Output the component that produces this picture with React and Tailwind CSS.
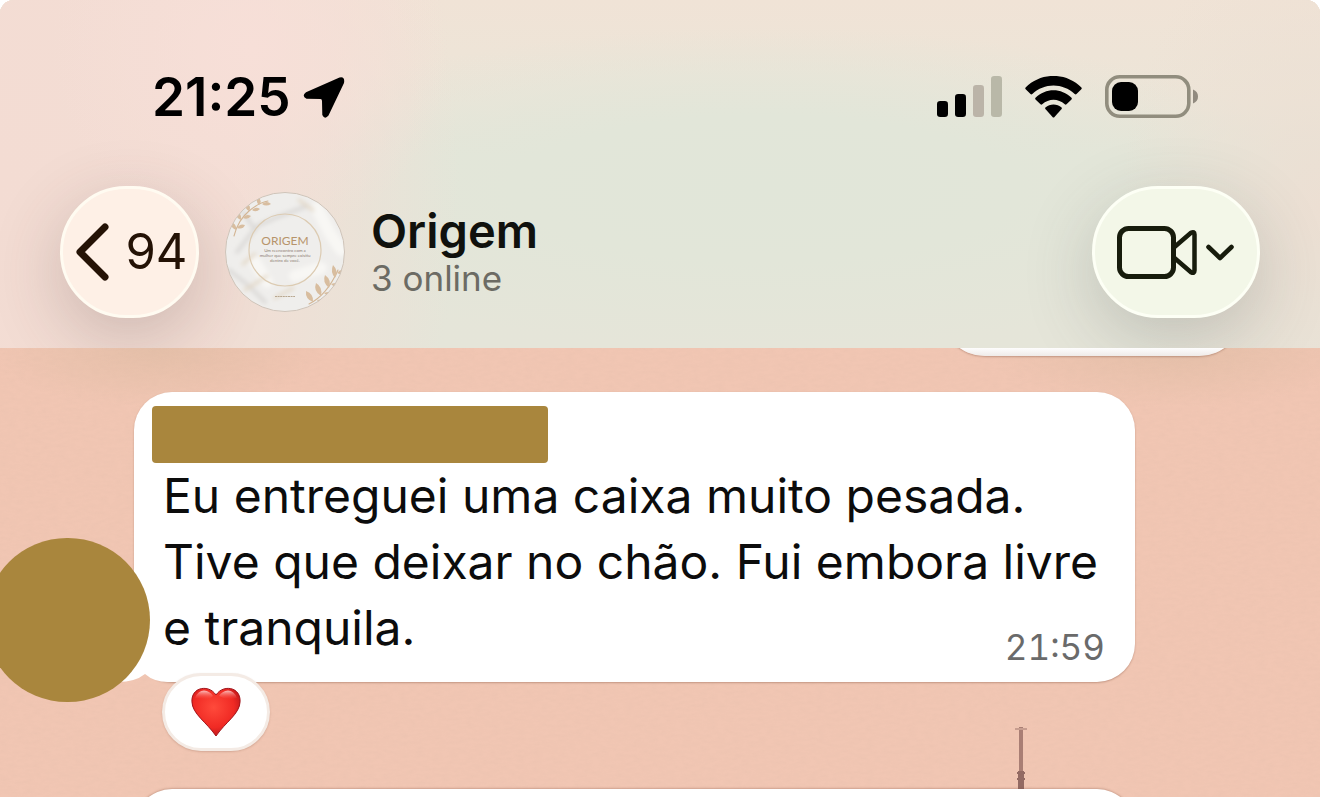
function LocationArrow() {
  return (
    <svg viewBox="0 0 42 42" className="h-[42px] w-[42px]" aria-hidden="true">
      <path
        d="M36.500 1.600 3 16.200Q-1.800 19.700 3.500 22.800L17.500 23Q19 23.200 19 25L19.300 39Q21.800 44 25.500 39.500L41 7Q42.200.2 36.500 1.600Z"
        fill="#000"
      />
    </svg>
  );
}

function SignalBars() {
  return (
    <svg viewBox="0 0 66 42" className="h-[42px] w-[66px]" aria-hidden="true">
      <rect x="0" y="25" width="11" height="16" rx="3.2" />
      <rect x="18" y="18" width="11" height="23" rx="3.2" />
      <rect x="36" y="9" width="11" height="32" rx="3.2" fill="#bbb4a8" />
      <rect x="54" y="0" width="11" height="41" rx="3.2" fill="#b9b8a8" />
    </svg>
  );
}

function WifiIcon() {
  return (
    <svg viewBox="0 0 58 43" className="h-[43px] w-[58px]" aria-hidden="true">
      <path d="M.6 11.500Q-.2 12.400.7 13.300L5.500 18Q6.400 18.900 7.300 18C19.300 6.600 37.700 6.600 49.700 18Q50.600 18.900 51.500 18L56.300 13.300Q57.200 12.400 56.400 11.500C40.800-4 16.200-4 .6 11.500Z" />
      <path d="M10.500 21.800Q9.700 22.600 10.500 23.400L15.500 28.300Q16.300 29.100 17.200 28.300C23.800 22.300 33.200 22.300 39.800 28.300Q40.700 29.100 41.500 28.300L46.500 23.400Q47.300 22.600 46.500 21.800C36.200 11.800 20.800 11.800 10.500 21.800Z" />
      <path d="M20.400 31.600Q19.700 32.300 20.400 33.100L27.500 41Q28.500 42 29.500 41L36.600 33.100Q37.300 32.300 36.600 31.600C32.100 27.600 24.900 27.600 20.400 31.600Z" />
    </svg>
  );
}

function BatteryIcon() {
  return (
    <svg viewBox="0 0 94 44" className="h-[44px] w-[94px]" aria-hidden="true">
      <rect x="1.8" y="1.8" width="82" height="39.500" rx="13" fill="none" stroke="#918d7e" strokeWidth="3.6" />
      <rect x="7" y="7" width="26" height="29" rx="9" />
      <path d="M88 14.500Q93 16.500 93 21.500T88 28.500Z" fill="#918a7f" />
    </svg>
  );
}

function StatusBar() {
  return (
    <div className="flex items-center justify-between pr-[121px] pl-[152px]">
      <div className="flex items-center gap-3">
        <span className="text-[53px] leading-[60px] font-semibold text-black">21:25</span>
        <LocationArrow />
      </div>
      <div className="flex items-center gap-[22px]">
        <SignalBars />
        <WifiIcon />
        <BatteryIcon />
      </div>
    </div>
  );
}

function GroupAvatar() {
  return (
    <svg viewBox="0 0 120 120" className="h-[120px] w-[120px] shrink-0" role="img" aria-label="Origem">
      <defs>
        <clipPath id="avatar-clip">
          <circle cx="60" cy="60" r="59.5" />
        </clipPath>
        <filter id="avatar-soft">
          <feGaussianBlur stdDeviation="2" />
        </filter>
      </defs>
      <g clipPath="url(#avatar-clip)">
        <rect width="120" height="120" fill="#efeeec" />
        <g filter="url(#avatar-soft)" fill="none" strokeLinecap="round">
          <path d="M12 60 32 34 55 24 82 14M30 38 18 20M4 78 24 94 40 110" stroke="#dcdad8" strokeWidth="4" />
          <path d="M92 16 104 40 116 58M70 84 96 76M30 70 42 90" stroke="#f8f7f4" strokeWidth="12" />
          <path d="M20 98 42 84M50 106 68 96M74 8 88 18M18 72 30 62" stroke="#e3d8c7" strokeWidth="3" />
        </g>
        <g fill="none" stroke="#d3b594" strokeWidth="1.1" strokeLinecap="round">
          <path d="M9 44Q13 28 24 19T43 9" />
          <path d="M84 112Q102 103 113 78" />
        </g>
        <g fill="#d8bd9f">
          <path d="M11 38Q5 35 6 30Q12 32 11 38ZM12 36Q15 31 20 33Q18 38 12 36ZM16 28Q10 26 12 20Q17 22 16 28ZM18 26Q21 21 26 24Q23 28 18 26ZM24 19Q19 16 21 11Q27 14 24 19ZM27 18Q31 14 35 17Q31 21 27 18ZM34 13Q30 9 33 5Q38 9 34 13ZM37 12Q42 8 46 12Q41 15 37 12Z" />
          <path d="M88 110Q80 107 81 99Q89 102 88 110ZM92 108Q98 106 102 111Q95 113 92 108ZM96 104Q88 99 91 91Q98 95 96 104ZM99 101Q106 98 110 103Q103 106 99 101ZM104 96Q97 90 100 83Q107 88 104 96ZM106 92Q113 89 116 94Q110 97 106 92ZM110 86Q105 80 108 73Q114 79 110 86ZM112 81Q116 76 119 79Q117 84 112 81Z" />
        </g>
        <circle cx="60" cy="58" r="36" fill="none" stroke="#dccbb2" strokeWidth="1.2" />
        <text x="60" y="53" textAnchor="middle" fontSize="12" fill="#b7946b" className="font-['Lato',sans-serif]">
          ORIGEM
        </text>
        <g fill="#8c7c73" textAnchor="middle" fontSize="4.4" className="font-['Lato',sans-serif]">
          <text x="60" y="60">Um reencontro com a</text>
          <text x="60" y="65">mulher que sempre existiu</text>
          <text x="60" y="70">dentro de você.</text>
        </g>
        <path d="M50 104.500H70" stroke="#b8a78f" strokeWidth="1" strokeDasharray="2 .6" />
      </g>
      <circle cx="60" cy="60" r="59.500" fill="none" stroke="#cfc4b9" strokeWidth="1" />
    </svg>
  );
}

function ChatNav() {
  return (
    <nav className="flex items-center px-[60px]">
      <button
        type="button"
        aria-label="Back, 94 unread"
        className="flex h-[132px] w-[139px] shrink-0 items-center justify-center gap-4 rounded-full border-3 border-[#fffbf1] bg-[#fef0e6] pl-1 text-[#241205] shadow-[0_20px_70px_rgba(80,60,60,0.24)]"
      >
        <svg viewBox="0 0 34 58" className="h-[58px] w-[34px]" fill="none" stroke="currentColor" strokeWidth="7" strokeLinecap="round" strokeLinejoin="round">
          <path d="M30 4 5 29 30 54" />
        </svg>
        <span className="text-[49px] leading-[60px]">94</span>
      </button>
      <a href="#group" className="ml-[26px] flex items-center gap-[26px]">
        <GroupAvatar />
        <div>
          <h1 className="text-[47px] leading-[52px] font-semibold text-[#10110d]">Origem</h1>
          <p className="text-[35px] leading-[42px] text-[#6c6b64]">3 online</p>
        </div>
      </a>
      <button
        type="button"
        aria-label="Video call"
        className="ml-auto flex h-[132px] w-[168px] shrink-0 items-center justify-center rounded-full border-3 border-[#fdfff5] bg-[#f3f7e8] text-[#171c0c] shadow-[0_20px_70px_rgba(70,75,75,0.24)]"
      >
        <svg viewBox="0 0 118 56" className="h-[56px] w-[118px]" fill="none" stroke="currentColor" strokeLinecap="round" strokeLinejoin="round">
          <rect x="2.500" y="4.500" width="54" height="48" rx="9" strokeWidth="5" />
          <path d="M57.500 23 74 8.800Q77.500 7 77.500 10.500V46.500Q77.500 50 74 48.200L57.500 34" strokeWidth="4.500" />
          <path d="M91.500 23 103 34 114.500 23" strokeWidth="4.600" />
        </svg>
      </button>
    </nav>
  );
}

function Wallpaper() {
  return (
    <svg className="absolute inset-0 h-full w-full" aria-hidden="true">
      <filter id="paper">
        <feTurbulence type="fractalNoise" baseFrequency="0.12 0.3" numOctaves="3" seed="4" />
        <feColorMatrix values="0 0 0 0 .7  0 0 0 0 .48  0 0 0 0 .38  .8 0 0 0 -.25" />
      </filter>
      <rect width="100%" height="100%" filter="url(#paper)" opacity="0.3" />
    </svg>
  );
}

function Heart() {
  return (
    <svg viewBox="0 0 50 50" className="h-[50px] w-[50px]" role="img" aria-label="Red heart">
      <defs>
        <radialGradient id="heart-fill" cx=".45" cy=".4" r=".65">
          <stop offset="0" stopColor="#ff4a3b" />
          <stop offset=".65" stopColor="#f02a24" />
          <stop offset="1" stopColor="#b71419" />
        </radialGradient>
        <linearGradient id="heart-shine" x1="0" y1="0" x2="0" y2="1">
          <stop offset="0" stopColor="#fff" stopOpacity=".7" />
          <stop offset="1" stopColor="#ff6a60" stopOpacity="0" />
        </linearGradient>
      </defs>
      <path
        d="M25 8C21 2 15 .8 10.500 1.600C4 2.800.7 8 .9 14.500C1.200 27 15.500 35 25 49C34.500 35 48.800 27 49.100 14.500C49.300 8 46 2.800 39.500 1.600C35 .8 29 2 25 8Z"
        fill="url(#heart-fill)"
        stroke="#a0141b"
        strokeWidth="1"
      />
      <path d="M4 11Q7 3.500 13 3.500Q19 4 22 9Q18 13 12 12T4 11ZM28 9Q31 4 37 3.500Q43 3.500 46 11Q43 12 38 12T28 9Z" fill="url(#heart-shine)" />
    </svg>
  );
}

function Message() {
  return (
    <article className="relative mr-[185px] ml-[134px] rounded-[38px] bg-white px-[18px] pt-[14px] pb-[21px] shadow-[0_1px_2px_rgba(130,80,60,0.4)]">
      <svg viewBox="0 0 56 30" className="absolute bottom-0 -left-4 h-[30px] w-[56px]" aria-hidden="true">
        <path d="M16 0V8Q14 26 0 30Q17 30 27 22Q36 30 50 30H56V0Z" fill="#fff" />
      </svg>
      <div className="relative h-[57px] w-[396px] rounded-[4px] bg-[#a9863d]" />
      <p className="relative mx-[11px] text-[48px] leading-[66px] text-[#0c0c0c]">
        Eu entreguei uma caixa muito pesada.
        <br />
        Tive que deixar no chão. Fui embora livre
        <br />e tranquila.
      </p>
      <time className="absolute right-[30px] bottom-[14px] text-[35px] leading-[42px] text-[#6a6a6a] tabular-nums">21:59</time>
      <div className="absolute bottom-[-20px] -left-[149px] h-[164px] w-[165px] rounded-full bg-[#a9863d]" />
      <button
        type="button"
        aria-label="Heart reaction"
        className="absolute -bottom-[69px] left-7 flex h-[78px] w-[108px] items-center justify-center rounded-full border-3 border-[#f4ebe5] bg-white shadow-[0_1px_2px_rgba(130,80,60,0.25)]"
      >
        <Heart />
      </button>
    </article>
  );
}

export default function App() {
  return (
    <div className="bg-white">
      <div className="flex h-screen flex-col overflow-hidden rounded-t-[14px] bg-[#f1c6b3] font-['Inter','Liberation_Sans',sans-serif]">
        <header className="relative shrink-0 overflow-hidden bg-[#e7e4d7] bg-[radial-gradient(ellipse_200px_200px_at_19%_14%,#f7dfd8_0%,transparent_100%),radial-gradient(ellipse_460px_620px_at_0%_50%,#f3dcd3_0%,#f3ddd4_50%,transparent_100%),radial-gradient(ellipse_200px_300px_at_100%_60%,#ecdfd3_0%,transparent_100%),radial-gradient(ellipse_560px_160px_at_58%_54%,#e1e6d9_0%,#e2e6d9_45%,transparent_100%),linear-gradient(#f0e3d6,#ece5d8_30%,#e5e6d9_45%,#e5e5d9)] pt-[67px] pb-[30px]">
          <StatusBar />
          <div className="mt-[59px]">
            <ChatNav />
          </div>
        </header>
        <main className="relative flex-1 bg-[radial-gradient(ellipse_170px_60px_at_12%_0px,#e4bfa8_0%,transparent_100%),radial-gradient(ellipse_190px_60px_at_89%_0px,#e4bfa8_0%,transparent_100%)]">
          <Wallpaper />
          <div className="relative flex h-[44px] items-start justify-end overflow-hidden pr-[77px]">
            <div className="-mt-[82px] h-[90px] w-[302px] shrink-0 rounded-[44px] bg-linear-to-b from-white from-90% to-[#efebe9] shadow-[0_1px_2px_rgba(130,80,60,0.4)]" />
          </div>
          <Message />
          <div className="relative h-[107px]">
            <svg viewBox="0 0 14 62" className="absolute right-[292px] bottom-0 h-[62px] w-[14px]" aria-hidden="true">
              <path d="M7 0V62" stroke="#a97e74" strokeWidth="4" />
              <path d="M1 2H13" stroke="#c79d8f" strokeWidth="2" />
              <path d="M7 44V62" stroke="#936a63" strokeWidth="6" />
              <path d="M3 46H11M3 52H11" stroke="#936a63" strokeWidth="2" />
            </svg>
          </div>
          <div className="relative mr-[185px] ml-[134px] h-[120px] rounded-[38px] bg-white shadow-[0_-1px_2px_rgba(130,80,60,0.3)]" />
        </main>
      </div>
    </div>
  );
}
